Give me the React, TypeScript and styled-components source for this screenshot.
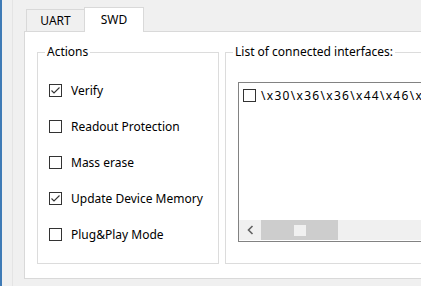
import React from 'react';
import styled, { createGlobalStyle } from 'styled-components';

const GlobalStyle = createGlobalStyle`
    html, body {
        margin: 0;
        padding: 0;
        background: #f0f0f0;
    }
    body {
        font-family: "Noto Sans", "Segoe UI", sans-serif;
        font-size: 12px;
        color: #000;
    }
`

const actions = [
    { label: 'Verify', checked: true },
    { label: 'Readout Protection', checked: false },
    { label: 'Mass erase', checked: false },
    { label: 'Update Device Memory', checked: true },
    { label: 'Plug&Play Mode', checked: false },
];

const CheckBox = ({ checked }: { checked: boolean }) => (
    <Box>
        {checked && (
            <svg width="11" height="11" viewBox="0 0 11 11">
                <path d="M1.5 5.5 L4 8 L9.5 2.5" fill="none" stroke="#333" strokeWidth="1.1" />
            </svg>
        )}
    </Box>
);

export default function App() {
    return (
        <>
            <GlobalStyle />
            <Window>
                <Accent />
                <Gutter />
                <TabWidget>
                    <TabBar>
                        <Tab>UART</Tab>
                        <Tab $active>SWD</Tab>
                    </TabBar>
                    <Panel>
                        <GroupBox $width={182}>
                            <Legend>Actions</Legend>
                            <CheckList>
                                {actions.map((a) => (
                                    <CheckRow key={a.label}>
                                        <CheckBox checked={a.checked} />
                                        <span>{a.label}</span>
                                    </CheckRow>
                                ))}
                            </CheckList>
                        </GroupBox>
                        <GroupBox $grow>
                            <Legend>List of connected interfaces:</Legend>
                            <ListBox>
                                <ListItems>
                                    <ListItem>
                                        <CheckBox checked={false} />
                                        <ItemText>{'\\x30\\x36\\x36\\x44\\x46\\x46\\x35\\x34\\x38\\x35'}</ItemText>
                                    </ListItem>
                                </ListItems>
                                <ScrollBar>
                                    <ScrollArrow>
                                        <svg width="7" height="10" viewBox="0 0 7 10">
                                            <path d="M5.5 1 L1.5 5 L5.5 9" fill="none" stroke="#606060" strokeWidth="1.6" />
                                        </svg>
                                    </ScrollArrow>
                                    <Thumb>
                                        <Grip />
                                    </Thumb>
                                </ScrollBar>
                            </ListBox>
                        </GroupBox>
                    </Panel>
                </TabWidget>
            </Window>
        </>
    );
}

const Window = styled.div`
    width: 421px;
    height: 286px;
    overflow: hidden;
    display: flex;
    background: #f0f0f0;
`
const Accent = styled.div`
    width: 2px;
    flex-shrink: 0;
    background: #3f7bb6;
`
const Gutter = styled.div`
    width: 10px;
    flex-shrink: 0;
    border-right: 1px solid #e4e4e4;
`
const TabWidget = styled.div`
    margin-left: 11px;
    padding-top: 7px;
    width: 420px;
    flex-shrink: 0;
    display: flex;
    flex-direction: column;
`
const TabBar = styled.div`
    display: flex;
    align-items: flex-end;
    height: 24px;
    padding-left: 2px;
    position: relative;
    z-index: 1;
`
const Tab = styled.div<{ $active?: boolean }>`
    box-sizing: border-box;
    width: ${(p) => (p.$active ? 60 : 59)}px;
    height: ${(p) => (p.$active ? 25 : 22)}px;
    margin-left: ${(p) => (p.$active ? -1 : 0)}px;
    margin-bottom: ${(p) => (p.$active ? -1 : 0)}px;
    padding-bottom: ${(p) => (p.$active ? 1 : 0)}px;
    border: 1px solid #d9d9d9;
    border-bottom: none;
    background: ${(p) => (p.$active ? '#fff' : '#f0f0f0')};
    display: flex;
    align-items: center;
    justify-content: center;
`
const Panel = styled.div`
    box-sizing: border-box;
    height: 248px;
    border: 1px solid #d9d9d9;
    background: #fff;
    display: flex;
    gap: 6px;
    padding: 12px 0 14px 12px;
`
const GroupBox = styled.fieldset<{ $width?: number; $grow?: boolean }>`
    box-sizing: border-box;
    margin: 0;
    min-width: 0;
    width: ${(p) => (p.$width ? `${p.$width}px` : 'auto')};
    flex: ${(p) => (p.$grow ? '1 0 250px' : '0 0 auto')};
    border: 1px solid #dcdcdc;
    padding: 0 0 0 7px;
    display: flex;
    flex-direction: column;
`
const Legend = styled.legend`
    padding: 0 2px;
    line-height: 16px;
`
const CheckList = styled.div`
    padding: 12px 0 0 4px;
    display: flex;
    flex-direction: column;
`
const CheckRow = styled.div`
    height: 36px;
    display: flex;
    align-items: center;
    gap: 9px;
    white-space: nowrap;
`
const Box = styled.div`
    box-sizing: border-box;
    width: 13px;
    height: 13px;
    flex-shrink: 0;
    border: 1px solid #333;
    background: #fff;
    display: flex;
    align-items: center;
    justify-content: center;
`
const ListBox = styled.div`
    box-sizing: border-box;
    margin: 22px 0 0 5px;
    height: 160px;
    border: 1px solid #828282;
    background: #fff;
    display: flex;
    flex-direction: column;
    overflow: hidden;
`
const ListItems = styled.div`
    flex: 1;
    padding-top: 2px;
`
const ListItem = styled.div`
    height: 20px;
    padding-left: 4px;
    display: flex;
    align-items: center;
    gap: 5px;
    white-space: nowrap;
`
const ItemText = styled.span`
    letter-spacing: 1.3px;
`
const ScrollBar = styled.div`
    height: 20px;
    margin-bottom: 1px;
    background: #f0f0f0;
    display: flex;
`
const ScrollArrow = styled.div`
    width: 22px;
    display: flex;
    align-items: center;
    justify-content: center;
`
const Thumb = styled.div`
    width: 77px;
    background: #cdcdcd;
    display: flex;
    align-items: center;
    justify-content: center;
`
const Grip = styled.div`
    width: 12px;
    height: 11px;
    background: #f0f0f0;
`
